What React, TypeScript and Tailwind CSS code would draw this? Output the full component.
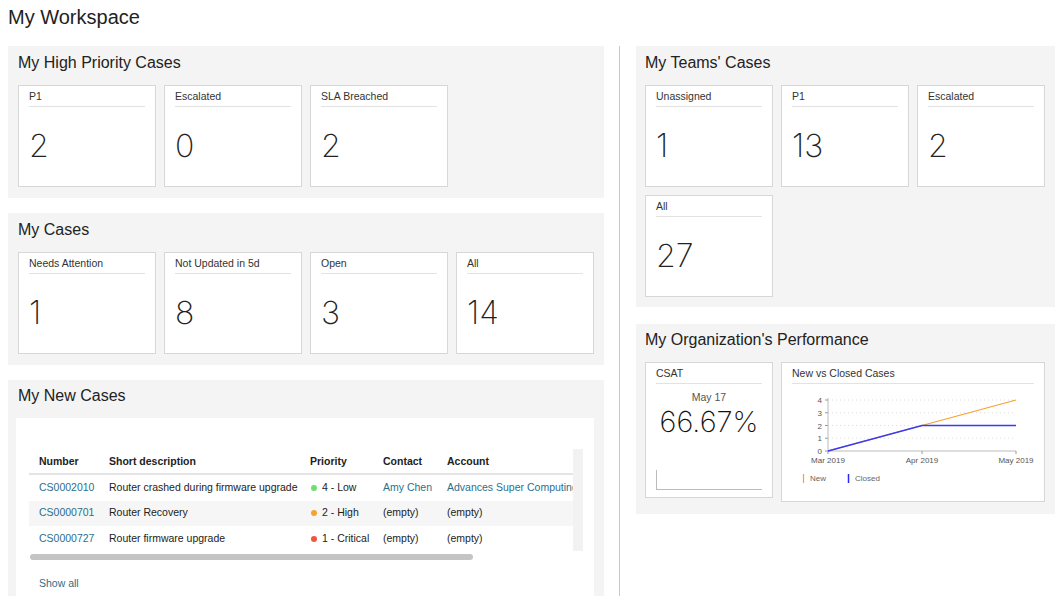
import React from 'react';

const font = { fontFamily: '"Liberation Sans", Arial, sans-serif' };
const thin = { fontFamily: 'Inter, "Liberation Sans", sans-serif' };

const panel = 'bg-[#f4f4f4] px-[10px] pt-[7px] pb-[11px]';
const panelTitle = 'text-[16px] leading-[20px] text-[#222] mb-[12px]';

// Tarjeta con etiqueta y número grande
const StatCard: React.FC<{ label: string; value: string; w: string }> = ({ label, value, w }) => (
  <div className={`${w} h-[102px] bg-white border border-[#d7d7d7] px-[10px] pt-[2px]`}>
    <div className="text-[10.5px] leading-[16px] pb-[2px] text-[#333] border-b border-[#e2e2e2]">{label}</div>
    <div className="mt-[19px] text-[32px] leading-[40px] text-[#222] font-extralight" style={thin}>
      {value}
    </div>
  </div>
);

const rows = [
  { num: 'CS0002010', desc: 'Router crashed during firmware upgrade', dot: 'bg-[#6ee06e]', pri: '4 - Low', contact: 'Amy Chen', account: 'Advances Super Computing', link: true, bg: 'bg-white' },
  { num: 'CS0000701', desc: 'Router Recovery', dot: 'bg-[#f7a12f]', pri: '2 - High', contact: '(empty)', account: '(empty)', link: false, bg: 'bg-[#f6f6f6]' },
  { num: 'CS0000727', desc: 'Router firmware upgrade', dot: 'bg-[#f2553c]', pri: '1 - Critical', contact: '(empty)', account: '(empty)', link: false, bg: 'bg-white' },
];

const NewCasesTable: React.FC = () => (
  <div className="bg-white ml-[8px] pt-[31px] pl-[13px] pr-[9px] h-[190px]">
    <div className="flex">
      <div className="w-[544px] overflow-hidden">
        <div className="w-[600px] text-[10.5px] text-[#222]">
          <div className="flex h-[26px] items-end pb-[3px] font-bold border-b-2 border-[#e4e4e4]">
            <div className="w-[80px] pl-[10px]">Number</div>
            <div className="w-[201px]">Short description</div>
            <div className="w-[73px]">Priority</div>
            <div className="w-[64px]">Contact</div>
            <div className="flex-1">Account</div>
          </div>
          {rows.map((r) => (
            <div key={r.num} className={`flex h-[25.5px] items-center ${r.bg}`}>
              <div className="w-[80px] pl-[10px] text-[#2b6f8c]">{r.num}</div>
              <div className="w-[201px]">{r.desc}</div>
              <div className="w-[73px] flex items-center">
                <span className={`inline-block w-[6px] h-[6px] rounded-full ${r.dot} ml-[1px] mr-[5px]`} />
                {r.pri}
              </div>
              <div className={`w-[64px] ${r.link ? 'text-[#2b6f8c]' : ''}`}>{r.contact}</div>
              <div className={`flex-1 whitespace-nowrap ${r.link ? 'text-[#2b6f8c]' : ''}`}>{r.account}</div>
            </div>
          ))}
        </div>
        <div className="h-[10px] flex items-center bg-white">
          <div className="w-[443px] h-[6px] rounded-full bg-[#c4c4c4] ml-[1px]" />
        </div>
      </div>
      <div className="w-[10px] h-[102px] bg-[#f2f2f2]" />
    </div>
    <div className="mt-[14px] pl-[10px] text-[10.5px] text-[#2b6f8c]">Show all</div>
  </div>
);

// Gráfico de casos nuevos vs cerrados
const LineChart: React.FC = () => {
  const y = (v: number) => 61 - v * 12.75;
  return (
    <svg width="242" height="100" className="block" style={font}>
      {[0, 1, 2, 3, 4].map((v) => (
        <g key={v}>
          {v > 0 && <line x1="36" x2="224" y1={y(v)} y2={y(v)} stroke="#dcdcdc" strokeWidth="1" strokeDasharray="1 3" />}
          <line x1="33" x2="36" y1={y(v)} y2={y(v)} stroke="#999" />
          <text x="30" y={y(v) + 3} fontSize="8" fill="#555" textAnchor="end">{v}</text>
        </g>
      ))}
      <line x1="36" x2="36" y1="8" y2="61" stroke="#bbb" />
      <line x1="36" x2="224" y1="61" y2="61" stroke="#bbb" />
      {[36, 130, 224].map((x) => (
        <line key={x} x1={x} x2={x} y1="61" y2="64" stroke="#999" />
      ))}
      <text x="36" y="73" fontSize="8" fill="#555" textAnchor="middle">Mar 2019</text>
      <text x="130" y="73" fontSize="8" fill="#555" textAnchor="middle">Apr 2019</text>
      <text x="224" y="73" fontSize="8" fill="#555" textAnchor="middle">May 2019</text>
      <polyline points={`36,${y(0)} 130,${y(2)} 224,${y(4)}`} fill="none" stroke="#f7a12f" strokeWidth="1.2" />
      <polyline points={`36,${y(0)} 130,${y(2)} 224,${y(2)}`} fill="none" stroke="#3a3af5" strokeWidth="1.3" />
      <line x1="11.5" x2="11.5" y1="84" y2="93" stroke="#f7a12f" strokeWidth="1.2" />
      <text x="18" y="91" fontSize="8" fill="#666">New</text>
      <line x1="56.5" x2="56.5" y1="84" y2="93" stroke="#2a2af0" strokeWidth="1.5" />
      <text x="63" y="91" fontSize="8" fill="#666">Closed</text>
    </svg>
  );
};

const App: React.FC = () => {
  return (
    <div className="w-[1061px] h-[596px] overflow-hidden bg-white" style={font}>
      <h1 className="pl-[8px] pt-[4px] text-[20px] leading-[26px] text-[#222]">My Workspace</h1>
      <div className="flex mt-[16px]">
        {/* Columna izquierda */}
        <div className="ml-[8px] w-[596px] flex flex-col gap-[15px]">
          <section className={panel}>
            <h2 className={panelTitle}>My High Priority Cases</h2>
            <div className="flex gap-[8px]">
              <StatCard w="w-[138px]" label="P1" value="2" />
              <StatCard w="w-[138px]" label="Escalated" value="0" />
              <StatCard w="w-[138px]" label="SLA Breached" value="2" />
            </div>
          </section>
          <section className={panel}>
            <h2 className={panelTitle}>My Cases</h2>
            <div className="flex gap-[8px]">
              <StatCard w="w-[138px]" label="Needs Attention" value="1" />
              <StatCard w="w-[138px]" label="Not Updated in 5d" value="8" />
              <StatCard w="w-[138px]" label="Open" value="3" />
              <StatCard w="w-[138px]" label="All" value="14" />
            </div>
          </section>
          <section className="bg-[#f4f4f4] pt-[6px] pr-[10px] h-[220px]">
            <h2 className="text-[16px] leading-[20px] text-[#222] mb-[12px] pl-[10px]">My New Cases</h2>
            <NewCasesTable />
          </section>
        </div>

        {/* Separador */}
        <div className="w-px bg-[#c8c8c8] ml-[15px] mr-[16px] h-[560px]" />

        {/* Columna derecha */}
        <div className="w-[419px] flex flex-col gap-[17px]">
          <section className="bg-[#f4f4f4] pl-[9px] pr-[10px] pt-[7px] pb-[10px]">
            <h2 className={panelTitle}>My Teams' Cases</h2>
            <div className="flex flex-wrap gap-[8px]">
              <StatCard w="w-[128px]" label="Unassigned" value="1" />
              <StatCard w="w-[128px]" label="P1" value="13" />
              <StatCard w="w-[128px]" label="Escalated" value="2" />
              <StatCard w="w-[128px]" label="All" value="27" />
            </div>
          </section>
          <section className="bg-[#f4f4f4] pl-[9px] pr-[10px] pt-[6px] pb-[12px]">
            <h2 className="text-[16px] leading-[20px] text-[#222] mb-[12px]">My Organization's Performance</h2>
            <div className="flex gap-[8px] items-start">
              <div className="w-[128px] h-[136px] bg-white border border-[#d7d7d7] px-[10px] pt-[2px]">
                <div className="text-[10.5px] leading-[16px] pb-[2px] text-[#333] border-b border-[#e2e2e2]">CSAT</div>
                <div className="text-center text-[10.5px] leading-[14px] text-[#555] mt-[6px]">May 17</div>
                <div className="text-center text-[29px] leading-[36px] text-[#111] font-extralight" style={thin}>
                  66.67%
                </div>
                <div className="mt-[30px] h-[20px] border-l border-b border-[#bbb]" />
              </div>
              <div className="w-[264px] h-[140px] bg-white border border-[#d7d7d7] px-[10px] pt-[2px]">
                <div className="text-[10.5px] leading-[16px] pb-[2px] text-[#333] border-b border-[#e2e2e2]">New vs Closed Cases</div>
                <div className="mt-[6px]">
                  <LineChart />
                </div>
              </div>
            </div>
          </section>
        </div>
      </div>
    </div>
  );
};

export default App;
